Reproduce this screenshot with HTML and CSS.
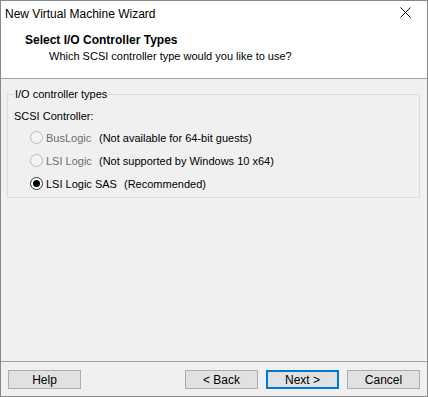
FILE: index.html
```html
<!DOCTYPE html>
<html lang="en">
<head>
    <meta charset="UTF-8">
    <meta name="viewport" content="width=device-width, initial-scale=1.0">
    <title>New Virtual Machine Wizard</title>
    <link rel="stylesheet" href="styles.css">
</head>
<body>
    <div class="window">
        <div class="titlebar">
            <span class="title">New Virtual Machine Wizard</span>
            <button class="close" aria-label="Close">
                <svg width="11" height="11" viewBox="0 0 11 11">
                    <path d="M0.5 0.5 L10.5 10.5 M10.5 0.5 L0.5 10.5" stroke="#000" stroke-width="1" fill="none"/>
                </svg>
            </button>
        </div>

        <header class="page-header">
            <h1>Select I/O Controller Types</h1>
            <p class="subtitle">Which SCSI controller type would you like to use?</p>
        </header>

        <main class="content">
            <fieldset class="group">
                <legend>I/O controller types</legend>
                <div class="group-label">SCSI Controller:</div>

                <label class="option disabled">
                    <input type="radio" name="scsi" disabled>
                    <span class="name name-short">BusLogic</span>
                    <span class="note">(Not available for 64-bit guests)</span>
                </label>
                <label class="option disabled">
                    <input type="radio" name="scsi" disabled>
                    <span class="name name-short">LSI Logic</span>
                    <span class="note">(Not supported by Windows 10 x64)</span>
                </label>
                <label class="option">
                    <input type="radio" name="scsi" checked>
                    <span class="name name-long">LSI Logic SAS</span>
                    <span class="note">(Recommended)</span>
                </label>
            </fieldset>
        </main>

        <footer class="buttons">
            <button class="btn">Help</button>
            <div class="spacer"></div>
            <button class="btn">&lt; Back</button>
            <button class="btn default">Next &gt;</button>
            <button class="btn">Cancel</button>
        </footer>
    </div>
</body>
</html>
```

FILE: styles.css
```css
:root {
    --window-border: #888888;
    --face: #f0f0f0;
    --line: #a0a0a0;
    --group-line: #dcdcdc;
    --text: #000000;
    --text-disabled: #6d6d6d;
    --btn-face: #e1e1e1;
    --btn-border: #adadad;
    --focus: #0078d7;
}

* {
    box-sizing: border-box;
    margin: 0;
    padding: 0;
}

body {
    font-family: "Liberation Sans", Arial, sans-serif;
    font-size: 11px;
    color: var(--text);
    background: #ffffff;
}

.window {
    width: 428px;
    height: 397px;
    border: 1px solid var(--window-border);
    background: var(--face);
    display: flex;
    flex-direction: column;
}

.titlebar {
    height: 30px;
    background: #ffffff;
    display: flex;
    align-items: center;
    justify-content: space-between;
    padding-left: 4px;
    padding-bottom: 4px;
}

.title {
    font-size: 12px;
}

.close {
    width: 46px;
    height: 30px;
    margin-top: 4px;
    border: none;
    background: transparent;
    display: flex;
    align-items: center;
    justify-content: center;
    padding-bottom: 8px;
    padding-left: 2px;
}

.page-header {
    height: 48px;
    background: #ffffff;
    border-bottom: 1px solid var(--line);
    padding: 2px 0 0 24px;
}

.page-header h1 {
    font-size: 12px;
    font-weight: bold;
    line-height: 14px;
}

.subtitle {
    padding-left: 24px;
    margin-top: 2px;
    line-height: 14px;
}

.content {
    flex: 1;
    padding: 8px 7px 0 6px;
}

.group {
    border: 1px solid var(--group-line);
    padding: 0 0 2px 6px;
}

.group legend {
    padding: 0 1px;
    line-height: 14px;
}

.group-label {
    margin-top: 8px;
    line-height: 14px;
    margin-bottom: 3px;
}

.option {
    display: flex;
    align-items: center;
    height: 23px;
    padding-left: 16px;
}

.option input {
    appearance: none;
    -webkit-appearance: none;
    flex: none;
    width: 13px;
    height: 13px;
    border-radius: 50%;
    border: 1px solid #333333;
    background: #ffffff;
    margin: 0 3px 0 0;
    display: flex;
    align-items: center;
    justify-content: center;
}

.option input:checked::after {
    content: "";
    width: 7px;
    height: 7px;
    border-radius: 50%;
    background: #000000;
}

.option.disabled input {
    border-color: #bcbcbc;
    background: #f4f4f4;
}

.option.disabled .name {
    color: var(--text-disabled);
}

.name {
    flex: none;
}

.name-short {
    width: 53px;
}

.name-long {
    width: 78px;
}

.buttons {
    height: 35px;
    border-top: 1px solid var(--line);
    display: flex;
    gap: 8px;
    padding: 8px 7px 0 7px;
}

.spacer {
    flex: 1;
}

.btn {
    width: 73px;
    height: 19px;
    background: var(--btn-face);
    border: 1px solid var(--btn-border);
    font-family: inherit;
    font-size: 12px;
    color: var(--text);
}

.btn.default {
    border: 2px solid var(--focus);
}
```
